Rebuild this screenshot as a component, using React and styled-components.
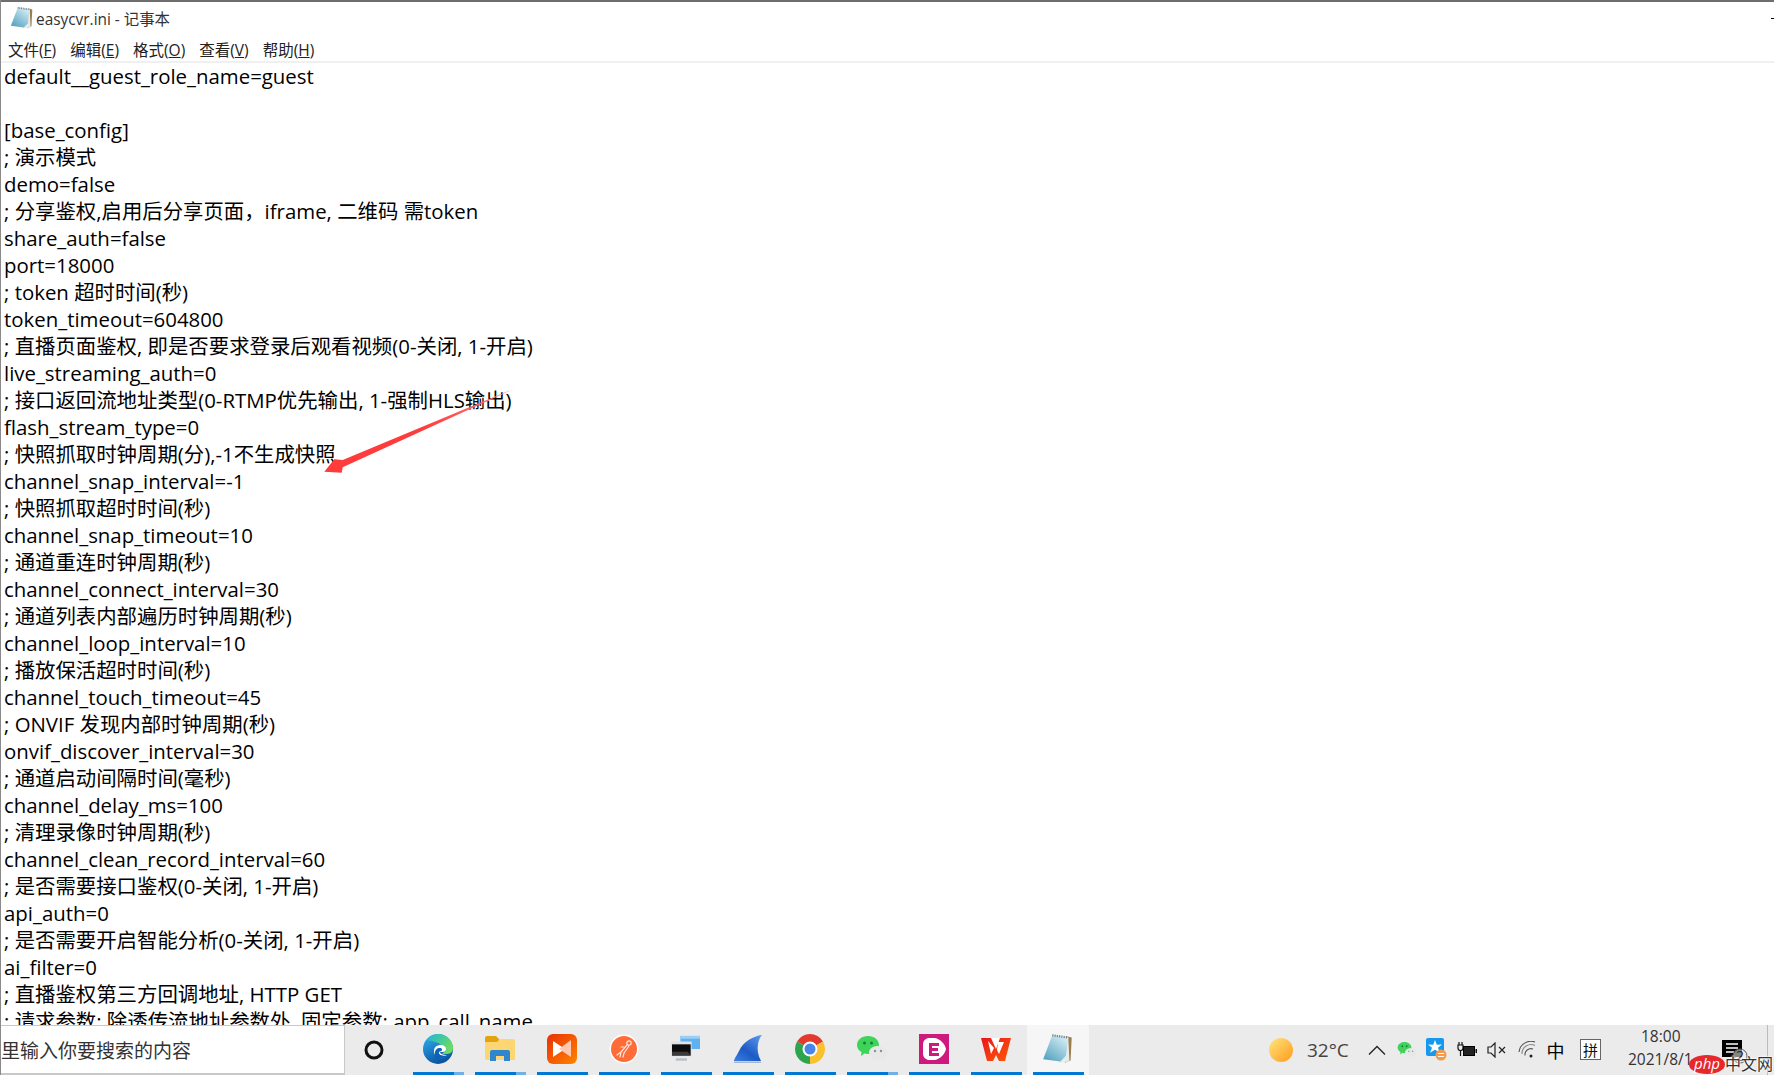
import styled, { createGlobalStyle } from 'styled-components';

const GlobalStyle = createGlobalStyle`
  html, body {
    margin: 0;
    padding: 0;
    background: #fff;
    overflow: hidden;
  }
`;

const lines = [
  'default__guest_role_name=guest',
  '',
  '[base_config]',
  '; 演示模式',
  'demo=false',
  '; 分享鉴权,启用后分享页面，iframe, 二维码 需token',
  'share_auth=false',
  'port=18000',
  '; token 超时时间(秒)',
  'token_timeout=604800',
  '; 直播页面鉴权, 即是否要求登录后观看视频(0-关闭, 1-开启)',
  'live_streaming_auth=0',
  '; 接口返回流地址类型(0-RTMP优先输出, 1-强制HLS输出)',
  'flash_stream_type=0',
  '; 快照抓取时钟周期(分),-1不生成快照',
  'channel_snap_interval=-1',
  '; 快照抓取超时时间(秒)',
  'channel_snap_timeout=10',
  '; 通道重连时钟周期(秒)',
  'channel_connect_interval=30',
  '; 通道列表内部遍历时钟周期(秒)',
  'channel_loop_interval=10',
  '; 播放保活超时时间(秒)',
  'channel_touch_timeout=45',
  '; ONVIF 发现内部时钟周期(秒)',
  'onvif_discover_interval=30',
  '; 通道启动间隔时间(毫秒)',
  'channel_delay_ms=100',
  '; 清理录像时钟周期(秒)',
  'channel_clean_record_interval=60',
  '; 是否需要接口鉴权(0-关闭, 1-开启)',
  'api_auth=0',
  '; 是否需要开启智能分析(0-关闭, 1-开启)',
  'ai_filter=0',
  '; 直播鉴权第三方回调地址, HTTP GET',
  '; 请求参数: 除透传流地址参数外, 固定参数: app_call_name',
];

const menus = [
  ['文件', 'F'],
  ['编辑', 'E'],
  ['格式', 'O'],
  ['查看', 'V'],
  ['帮助', 'H'],
];

function NotepadIcon({ size = 24, id = 'padPage' }) {
  return (
    <svg width={size} height={size} viewBox="0 0 28 28">
      <defs>
        <linearGradient id={id} x1="0.8" y1="0" x2="0.1" y2="1">
          <stop offset="0" stopColor="#d6eef4" />
          <stop offset="1" stopColor="#4f9fbe" />
        </linearGradient>
      </defs>
      <path d="M22 3l4 1-1 20-5 2z" fill="#9c7d4c" />
      <path d="M10 3l13 1 1 21-9 1z" fill="#e6ecee" />
      <path d="M9 2l14 2-2 16-5 5-15-2z" fill={`url(#${id})`} />
      <path d="M9 2l14 2" fill="none" stroke="#6f7c85" strokeWidth="2" strokeDasharray="1 1" />
    </svg>
  );
}

function CortanaIcon() {
  return (
    <svg width="22" height="22" viewBox="0 0 22 22">
      <circle cx="11" cy="11" r="8" fill="none" stroke="#111" strokeWidth="3" />
    </svg>
  );
}

function EdgeIcon() {
  return (
    <svg width="32" height="32" viewBox="0 0 32 32">
      <defs>
        <linearGradient id="edgeBlue" x1="0.2" y1="0.1" x2="0.6" y2="1">
          <stop offset="0" stopColor="#2aa5e6" />
          <stop offset="1" stopColor="#0b4f9e" />
        </linearGradient>
        <linearGradient id="edgeGreen" x1="0" y1="0" x2="1" y2="0.6">
          <stop offset="0" stopColor="#1fb6d8" />
          <stop offset="1" stopColor="#6ddc5f" />
        </linearGradient>
      </defs>
      <circle cx="16" cy="16" r="15" fill="url(#edgeBlue)" />
      <path d="M5 7C8 3 12 1 16 1c9 0 15 7 15 14 0 3-2 6-6 6h-5c3-2 3-6 0-8-3-4-10-5-15-6z" fill="url(#edgeGreen)" />
      <path d="M12 18c0-4 3-6 7-6 3 0 5 2 5 4s-2 3-4 3h-2c0 2 3 3 7 3-2 3-5 4-7 3-4-1-6-4-6-7z" fill="#fff" />
      <path d="M13 20c0-3 2-5 5-5 1 0 2 .5 2 1.500 0 2-2 1.500-3 2.500-1 2 3 5 9 3-3 4-8 6-12 3-1-1-1-3-1-5z" fill="#0d62b3" />
    </svg>
  );
}

function FolderIcon() {
  return (
    <svg width="30" height="26" viewBox="0 0 30 26">
      <path d="M0 2q0-2 2-2h9l3 3v3H0z" fill="#e3a30e" />
      <path d="M0 6l12 0 3-3h13q2 0 2 2v18q0 1-2 1H2q-2 0-2-2z" fill="#fbd673" />
      <path d="M5 25v-9q0-2 2-2h16q2 0 2 2v9h-6v-5h-8v5z" fill="#2f86cc" />
    </svg>
  );
}

function SlidesIcon() {
  return (
    <svg width="30" height="30" viewBox="0 0 30 30">
      <defs>
        <linearGradient id="slidesBg" x1="0" y1="0" x2="1" y2="1">
          <stop offset="0" stopColor="#e92f05" />
          <stop offset="1" stopColor="#ff8500" />
        </linearGradient>
      </defs>
      <rect width="30" height="30" rx="6" fill="url(#slidesBg)" />
      <path d="M6 7l12 8-12 8z" fill="#fff" />
      <path d="M24 6L12 15l12 8z" fill="#ffc8b0" />
    </svg>
  );
}

function PostmanIcon() {
  return (
    <svg width="30" height="30" viewBox="0 0 30 30">
      <circle cx="15" cy="15" r="14.500" fill="#fff" />
      <circle cx="15" cy="15" r="13" fill="#ff6c37" />
      <g fill="none" stroke="#ffe7dc" strokeWidth="1.200" strokeLinecap="round">
        <circle cx="20" cy="9" r="2.200" />
        <path d="M18 11l-6 7-1 5 M20 12l-5 7-1 4 M12 18l-4 3 M15 13l-3 0" />
      </g>
    </svg>
  );
}

function NetworkIcon() {
  return (
    <svg width="30" height="28" viewBox="0 0 32 30">
      <path d="M10 1h21v14H10z" fill="#5fb2ef" />
      <path d="M10 1h21v3H10z" fill="#9ad0f6" />
      <rect x="0" y="7" width="22" height="16" fill="#dfe3e6" />
      <rect x="1" y="10" width="20" height="12" fill="#0c0c0c" />
      <path d="M1 22h20l-3-4H1z" fill="#3a3a3a" />
      <rect x="5" y="25" width="12" height="2.500" fill="#b9bec2" />
    </svg>
  );
}

function SharkIcon() {
  return (
    <svg width="30" height="30" viewBox="0 0 30 30">
      <defs>
        <linearGradient id="fin" x1="0.9" y1="0" x2="0.1" y2="1">
          <stop offset="0" stopColor="#5c97ea" />
          <stop offset="0.6" stopColor="#1c5ac6" />
          <stop offset="1" stopColor="#3c7be0" />
        </linearGradient>
      </defs>
      <path d="M29 1C20 2 10 8 6 17c-2 4-5 8-5 10h27c-3-6-4-11-3-17 .500-3 2-7 4-9z" fill="url(#fin)" />
      <path d="M1 27.500h27v1.500H1z" fill="#a8b8cc" />
    </svg>
  );
}

function ChromeIcon() {
  return (
    <svg width="30" height="30" viewBox="0 0 30 30">
      <path d="M15 15L2.010 7.500A15 15 0 0 1 27.990 7.500z" fill="#e23a2e" />
      <path d="M15 15L27.990 7.500A15 15 0 0 1 15 30z" fill="#fbc02d" />
      <path d="M15 15V30A15 15 0 0 1 2.010 7.500z" fill="#2fa44f" />
      <circle cx="15" cy="15" r="7.500" fill="#fff" />
      <circle cx="15" cy="15" r="5.500" fill="#4a86e8" />
    </svg>
  );
}

function WechatIcon({ size = 32 }) {
  return (
    <svg width={size} height={size} viewBox="0 0 32 28">
      <path d="M12 1c6.500 0 11 4 11 9s-4.500 9-11 9c-1.200 0-2.400-.200-3.500-.500L5 21l.500-4C2.500 15.500 1 13 1 10c0-5 4.500-9 11-9z" fill="#3ed45a" />
      <circle cx="8.500" cy="8" r="1.500" fill="#1a7d32" />
      <circle cx="15.500" cy="8" r="1.500" fill="#1a7d32" />
      <path d="M22 11c5 0 9 3 9 7 0 2-1 4-3 5l.500 3-3-1.800c-1 .300-2.300.500-3.500.500-5 0-9-3-9-7s4-6.700 9-6.700z" fill="#e8e8e8" />
      <circle cx="19" cy="16" r="1.200" fill="#8f8f8f" />
      <circle cx="25" cy="16" r="1.200" fill="#8f8f8f" />
    </svg>
  );
}

function EasyIcon() {
  return (
    <svg width="30" height="30" viewBox="0 0 30 30">
      <rect width="30" height="30" fill="#cd1a7c" />
      <path d="M9 4h7c5 1 10 6 11 11-1 5-6 10-11 11H9c-3-1-5-3-5-6V10c0-3 2-5 5-6z" fill="#fff" />
      <path d="M10 9h10v3h-7v2h6v3h-6v2h7v3H10z" fill="#cd1a7c" />
    </svg>
  );
}

function WpsIcon() {
  return (
    <svg width="30" height="24" viewBox="0 0 30 24">
      <defs>
        <linearGradient id="wps" x1="0" y1="0" x2="1" y2="1">
          <stop offset="0" stopColor="#e9151b" />
          <stop offset="1" stopColor="#ff5a0a" />
        </linearGradient>
      </defs>
      <path d="M0 1h30l-6 23h-6l-3-6-3 6H6z" fill="url(#wps)" />
      <path d="M7 4l3 13 3-6zM17 5h6l-5 12-2-4z" fill="#fff" />
      <path d="M10 1l5 11 4-11z" fill="#fff" />
    </svg>
  );
}

function AlipayIcon() {
  return (
    <svg width="22" height="24" viewBox="0 0 22 24">
      <rect width="18" height="18" y="0" rx="2" fill="#1598ee" />
      <path d="M9 2l1.800 4.800L16 6.500l-4 3.300 2 5-5-3-5 3 2-5-4-3.300 5.200.300z" fill="#fff" />
      <circle cx="15" cy="17" r="5.500" fill="#f59a4a" />
      <path d="M12 15.500h6M12 18.500h6" stroke="#fff" strokeWidth="1.200" />
    </svg>
  );
}

function BatteryIcon() {
  return (
    <svg width="20" height="16" viewBox="0 0 20 16">
      <path d="M2 0v3M5 0v3M1 3h5v3a2.500 2.500 0 0 1-5 0zM3.500 8v6" fill="none" stroke="#111" strokeWidth="1.200" />
      <rect x="6.500" y="4.500" width="11" height="9" fill="#222" stroke="#000" />
      <rect x="18.500" y="7" width="1.500" height="4" fill="#111" />
    </svg>
  );
}

function VolumeIcon() {
  return (
    <svg width="20" height="16" viewBox="0 0 20 16">
      <path d="M1 5h3l4-4v14l-4-4H1z" fill="none" stroke="#222" strokeWidth="1.200" />
      <path d="M12 5l6 6M18 5l-6 6" stroke="#222" strokeWidth="1.200" />
    </svg>
  );
}

function WifiIcon() {
  return (
    <svg width="18" height="18" viewBox="0 0 18 18">
      <g fill="none" stroke="#555" strokeWidth="1.100">
        <path d="M1 11A12 12 0 0 1 17 1" />
        <path d="M4 13A9 9 0 0 1 17 4.500" stroke="#888" />
        <path d="M7 14.500A6 6 0 0 1 15 8" />
      </g>
      <circle cx="13" cy="15" r="1.500" fill="#222" />
    </svg>
  );
}

function NoticeIcon() {
  return (
    <svg width="30" height="28" viewBox="0 0 30 28">
      <path d="M1 0h20v17h-6l-4 4v-4H1z" fill="#000" />
      <path d="M5 4h12M5 8h12M5 12h8" stroke="#fff" strokeWidth="1.400" />
      <circle cx="19" cy="16" r="7" fill="#f0f0f0" fillOpacity="0.55" stroke="#555" strokeWidth="1" />
    </svg>
  );
}

const tasks = [
  { icon: <EdgeIcon />, stacked: true },
  { icon: <FolderIcon />, stacked: true },
  { icon: <SlidesIcon /> },
  { icon: <PostmanIcon /> },
  { icon: <NetworkIcon /> },
  { icon: <SharkIcon /> },
  { icon: <ChromeIcon /> },
  { icon: <WechatIcon />, stacked: true },
  { icon: <EasyIcon /> },
  { icon: <WpsIcon /> },
  { icon: <NotepadIcon size={32} id="padPageTask" />, active: true },
];

const trayIcons = [
  <svg width="18" height="10" viewBox="0 0 18 10" key="up"><path d="M1 9.500L9 1.500l8 8" fill="none" stroke="#222" strokeWidth="1.300" /></svg>,
  <WechatIcon size={20} key="wx" />,
  <AlipayIcon key="pay" />,
  <BatteryIcon key="bat" />,
  <VolumeIcon key="vol" />,
  <WifiIcon key="wifi" />,
];

function App() {
  return (
    <Page>
      <GlobalStyle />
      <TitleBar>
        <NotepadIcon />
        <TitleText>easycvr.ini - 记事本</TitleText>
        <WindowTick />
      </TitleBar>
      <MenuBar>
        {menus.map(([label, key]) => (
          <MenuItem key={key}>
            {label}(<u>{key}</u>)
          </MenuItem>
        ))}
      </MenuBar>
      <Editor>
        {lines.map((line, i) => (
          <Line key={i}>{line}</Line>
        ))}
      </Editor>
      <Taskbar>
        <SearchBox>
          <span>在这里输入你要搜索的内容</span>
        </SearchBox>
        <CortanaButton>
          <CortanaIcon />
        </CortanaButton>
        {tasks.map((task, i) => (
          <TaskButton key={i} $active={task.active}>
            <TaskIcon>{task.icon}</TaskIcon>
            <TaskLine $stacked={task.stacked} />
          </TaskButton>
        ))}
        <Weather>
          <Sun />
          <Temp>32°C</Temp>
        </Weather>
        {trayIcons.map((icon, i) => (
          <TrayItem key={i}>{icon}</TrayItem>
        ))}
        <ImeItem>中</ImeItem>
        <PinyinBox>拼</PinyinBox>
        <Clock>
          <ClockTime>18:00</ClockTime>
          <span>2021/8/1</span>
        </Clock>
        <Notice>
          <NoticeIcon />
          <NoticeCount>2</NoticeCount>
        </Notice>
      </Taskbar>
      <Arrow viewBox="0 0 200 92" width="200" height="92">
        <defs>
          <linearGradient id="arrowFade" x1="1" y1="0" x2="0" y2="1">
            <stop offset="0" stopColor="#ffd0d0" />
            <stop offset="0.15" stopColor="#ff6a6a" />
            <stop offset="0.5" stopColor="#ff3b3b" />
            <stop offset="1" stopColor="#ff3b3b" />
          </linearGradient>
        </defs>
        <path d="M197 2L21.700 75L13.300 74.300L3.300 86.700L20.700 87.700L21.700 82.300z" fill="url(#arrowFade)" />
      </Arrow>
      <Watermark>
        <PhpOval>php</PhpOval>
        <WatermarkText>中文网</WatermarkText>
      </Watermark>
    </Page>
  );
}

const Page = styled.div`
  position: relative;
  display: flex;
  flex-direction: column;
  width: 1774px;
  height: 1075px;
  overflow: hidden;
  background: #fff;
  border-left: 1px solid #8a8a8a;
  box-sizing: border-box;
  font-family: "Open Sans", "Noto Sans CJK SC", sans-serif;
`;

const TitleBar = styled.div`
  position: relative;
  display: flex;
  align-items: center;
  gap: 2px;
  height: 38px;
  padding: 0 0 4px 9px;
  box-sizing: border-box;
  border-top: 2px solid #6e6e6e;
`;

const TitleText = styled.span`
  font-size: 15.400px;
  color: #333;
`;

const WindowTick = styled.i`
  position: absolute;
  right: 0;
  top: 16px;
  width: 3px;
  height: 1px;
  background: #000;
`;

const MenuBar = styled.div`
  display: flex;
  align-items: center;
  gap: 14px;
  height: 25px;
  padding-left: 7px;
  box-sizing: border-box;
  border-bottom: 2px solid #f0f0f0;
`;

const MenuItem = styled.span`
  font-size: 15.500px;
  color: #222;
  white-space: nowrap;
`;

const Editor = styled.div`
  flex: 1;
  min-height: 0;
  overflow: hidden;
  padding: 0 0 0 3px;
`;

const Line = styled.div`
  height: 27px;
  line-height: 27px;
  font-size: 20.400px;
  color: #000;
  white-space: pre;
`;

const Taskbar = styled.div`
  display: flex;
  flex: none;
  height: 50px;
  margin-left: -1px;
  background: #ebebeb;
`;

const SearchBox = styled.div`
  display: flex;
  justify-content: flex-end;
  align-items: center;
  flex: none;
  width: 345px;
  padding-right: 153px;
  box-sizing: border-box;
  overflow: hidden;
  background: #fff;
  border-top: 1px solid #c8c8c8;
  border-right: 1px solid #c8c8c8;
  border-bottom: 2px solid #c8c8c8;
  font-size: 19px;
  color: #333;
  white-space: nowrap;
`;

const CortanaButton = styled.div`
  display: flex;
  align-items: center;
  justify-content: center;
  flex: none;
  width: 58px;
  margin-right: 4px;
`;

const TaskButton = styled.div`
  display: flex;
  flex-direction: column;
  flex: none;
  width: 62px;
  background: ${(p) => (p.$active ? '#f6f6f6' : 'transparent')};
`;

const TaskIcon = styled.div`
  display: flex;
  align-items: center;
  justify-content: center;
  flex: 1;
`;

const TaskLine = styled.div`
  height: 3px;
  margin: ${(p) => (p.$stacked ? '0 5px 0 6px' : '0 5px 0 6px')};
  background: ${(p) =>
    p.$stacked
      ? 'linear-gradient(90deg, #0078d4 0 80%, #6fb1e6 80% 100%)'
      : '#0078d4'};
`;

const Weather = styled.div`
  display: flex;
  align-items: center;
  gap: 14px;
  flex: none;
  width: 93px;
  margin-left: 180px;
`;

const Sun = styled.div`
  width: 24px;
  height: 24px;
  border-radius: 50%;
  background: linear-gradient(135deg, #ffe680, #ff9a1a);
`;

const Temp = styled.span`
  font-size: 19px;
  color: #444;
`;

const TrayItem = styled.div`
  display: flex;
  align-items: center;
  justify-content: center;
  flex: none;
  width: 30px;
`;

const ImeItem = styled(TrayItem)`
  width: 27px;
  font-size: 18px;
  color: #000;
`;

const PinyinBox = styled.div`
  display: flex;
  align-items: center;
  justify-content: center;
  flex: none;
  width: 19px;
  height: 19px;
  margin: 14px 0 0 11px;
  border: 1px solid #666;
  background: #fff;
  font-size: 15px;
  color: #111;
`;

const Clock = styled.div`
  display: flex;
  flex-direction: column;
  gap: 2px;
  flex: none;
  width: 108px;
  padding: 1px 0 0 27px;
  box-sizing: border-box;
  font-size: 15.500px;
  line-height: 21px;
  color: #333;
`;

const ClockTime = styled.span`
  margin-left: 13px;
`;

const Notice = styled.div`
  position: relative;
  flex: none;
  width: 48px;
  padding: 15px 0 0 1px;
  box-sizing: border-box;
  border-right: 1px solid #bbb;
  margin-left: auto;
  margin-right: 6px;
`;

const NoticeCount = styled.span`
  position: absolute;
  left: 16px;
  top: 21px;
  font-size: 14px;
  line-height: 20px;
  color: #222;
`;

const Arrow = styled.svg`
  position: absolute;
  left: 320px;
  top: 385px;
`;

const Watermark = styled.div`
  position: absolute;
  right: 1px;
  bottom: 1px;
  display: flex;
  align-items: center;
`;

const PhpOval = styled.span`
  display: block;
  width: 36px;
  height: 19px;
  border-radius: 50%;
  background: #e6282e;
  color: #fff;
  font-size: 15px;
  line-height: 17px;
  text-align: center;
  font-style: italic;
`;

const WatermarkText = styled.span`
  font-size: 16px;
  line-height: 19px;
  color: #333;
  text-shadow: 0 0 2px #fff, 0 0 2px #fff, 0 0 2px #fff;
`;

export default App;
